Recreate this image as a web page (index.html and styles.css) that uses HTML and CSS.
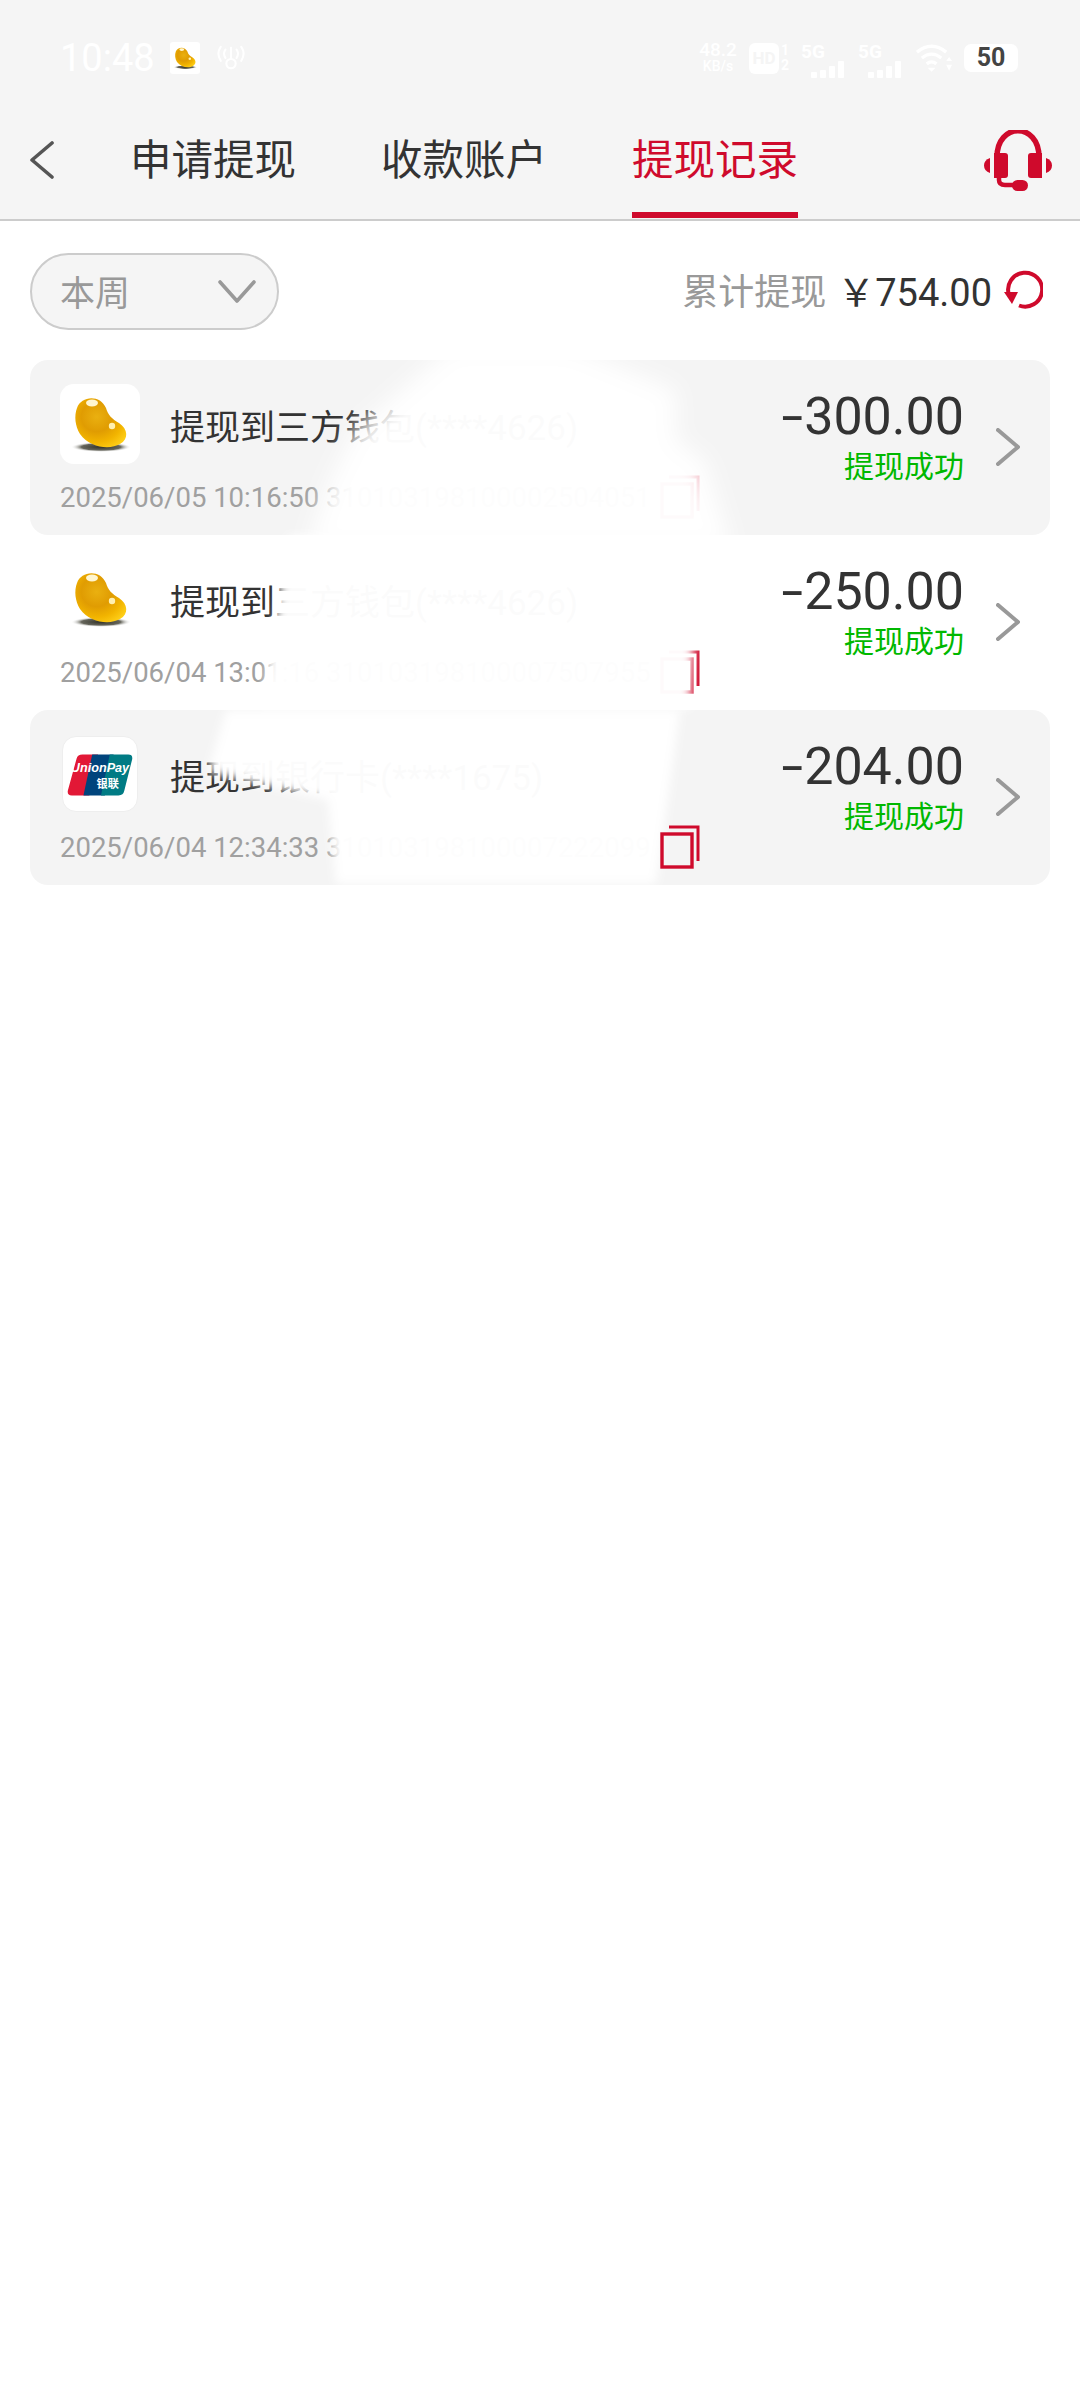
FILE: index.html
```html
<!DOCTYPE html>
<html lang="zh-CN">
<head>
  <meta charset="UTF-8">
  <title>提现记录</title>
  <meta name="viewport" content="width=device-width, initial-scale=1.0">
  <link rel="stylesheet" href="styles.css">
</head>
<body>

<!-- Shared gradients for the bean artwork -->
<svg class="defs" width="0" height="0">
  <defs>
    <radialGradient id="beanFill" cx="0.42" cy="0.38" r="0.72">
      <stop offset="0" stop-color="#eab010"/>
      <stop offset="0.42" stop-color="#e09c02"/>
      <stop offset="0.72" stop-color="#f2b400"/>
      <stop offset="1" stop-color="#ffd018"/>
    </radialGradient>
    <radialGradient id="beanShadow">
      <stop offset="0" stop-color="#333329"/>
      <stop offset="0.65" stop-color="#66665c"/>
      <stop offset="1" stop-color="#ffffff" stop-opacity="0"/>
    </radialGradient>
    <symbol id="bean" viewBox="0 0 80 80">
      <ellipse cx="41" cy="63" rx="30" ry="5" fill="url(#beanShadow)"/>
      <path d="M17 24 C21 12 40 10 46 24 C48 31 52 35 59 39 C68 45 69 55 60 60 C50 66 30 64 20 50 C15 42 14 32 17 24 Z" fill="url(#beanFill)"/>
      <ellipse cx="32" cy="19" rx="6" ry="3.4" fill="#fff6d0"/>
      <circle cx="52" cy="42" r="3.2" fill="#fff0b0"/>
    </symbol>
    <symbol id="copy" viewBox="0 0 40 44">
      <path d="M9 2 H38 V36" fill="none" stroke="#cf0a2c" stroke-width="3"/>
      <rect x="2" y="9" width="30" height="33" fill="none" stroke="#cf0a2c" stroke-width="3.4"/>
    </symbol>
    <symbol id="next" viewBox="0 0 24 38">
      <path d="M2 2 L22 19 L2 36" fill="none" stroke="#999" stroke-width="4" stroke-linecap="round" stroke-linejoin="round"/>
    </symbol>
  </defs>
</svg>

<header class="top">
  <div class="status-bar">
    <span class="clock">10:48</span>
    <svg class="status-bean" viewBox="0 0 30 32">
      <rect width="30" height="32" rx="3" fill="#fff"/>
      <use href="#bean" x="-1" y="0" width="32" height="32"/>
    </svg>
    <svg class="hotspot" viewBox="0 0 32 30" fill="none" stroke="#fff" stroke-width="2.2" stroke-linecap="round">
      <circle cx="16" cy="21" r="5"/>
      <path d="M16 4 V15 M10 6 Q7 10 10 15 M22 6 Q25 10 22 15 M5 3 Q0 10 5 18 M27 3 Q32 10 27 18"/>
    </svg>
    <div class="status-right">
      <div class="speed"><span>48.2</span><span class="speed-unit">KB/s</span></div>
      <div class="hd">HD</div>
      <div class="sim-nums"><span>1</span><span>2</span></div>
      <div class="signal">
        <span class="net">5G</span>
        <div class="bars"><i class="b1"></i><i class="b2"></i><i class="b3"></i><i class="b4"></i></div>
      </div>
      <div class="signal">
        <span class="net">5G</span>
        <div class="bars"><i class="b1"></i><i class="b2"></i><i class="b3"></i><i class="b4"></i></div>
      </div>
      <svg class="wifi" viewBox="0 0 38 30" fill="none" stroke="#fff" stroke-width="3.4">
        <path d="M1 9 Q16 -3 31 9 M6 15 Q16 7 26 15 M11 21 Q16 17 21 21"/>
        <path d="M12 25 L16 29 L20 25 Z M34 14 L37 18 H31 Z M34 28 L37 22 H31 Z" fill="#fff" stroke="none"/>
      </svg>
      <div class="battery">50</div>
    </div>
  </div>

  <nav class="tabs">
    <svg class="back" viewBox="0 0 24 38">
      <path d="M22 2 L2 19 L22 36" fill="none" stroke="#555" stroke-width="3.6" stroke-linecap="round" stroke-linejoin="round"/>
    </svg>
    <div class="tab">申请提现</div>
    <div class="tab">收款账户</div>
    <div class="tab active">提现记录</div>
    <svg class="headset" viewBox="0 0 72 62" fill="#cf0a2c">
      <path d="M14 27 C14 -8 56 -8 56 27" fill="none" stroke="#cf0a2c" stroke-width="5.5"/>
      <path d="M11 23 H22 Q25 23 25 26 V45 Q25 48 22 48 H11 Z"/>
      <path d="M59 23 H48 Q45 23 45 26 V45 Q45 48 48 48 H59 Z"/>
      <path d="M7 28 V43 Q1 41 1 35.5 Q1 30 7 28 Z"/>
      <path d="M63 28 V43 Q69 41 69 35.5 Q69 30 63 28 Z"/>
      <path d="M16 47 V50 Q16 55 22 55 H33" fill="none" stroke="#cf0a2c" stroke-width="4.5"/>
      <rect x="29" y="50" width="16" height="11" rx="5.5"/>
    </svg>
  </nav>
</header>

<section class="summary">
  <div class="filter">
    <span class="filter-text">本周</span>
    <svg class="filter-arrow" viewBox="0 0 38 24">
      <path d="M2 2 L19 21 L36 2" fill="none" stroke="#999" stroke-width="3.6" stroke-linecap="round" stroke-linejoin="round"/>
    </svg>
  </div>
  <div class="total">
    <span class="total-label">累计提现</span>
    <span class="total-value">￥754.00</span>
    <svg class="refresh" viewBox="0 0 40 40" fill="none">
      <path d="M6 26 A17 17 0 1 1 16 36.5" stroke="#cf0a2c" stroke-width="4"/>
      <path d="M1 23 H15 L9 35 Z" fill="#cf0a2c"/>
    </svg>
  </div>
</section>

<main class="records">
  <div class="record alt">
    <div class="record-main">
      <div class="record-head">
        <svg class="icon"><use href="#bean"/></svg>
        <span class="record-title">提现到三方钱包(****4626)</span>
      </div>
      <div class="record-meta">
        <span class="record-date">2025/06/05 10:16:50 310103198100002504051</span>
        <svg class="copy"><use href="#copy"/></svg>
      </div>
    </div>
    <div class="record-side">
      <div class="amount"><span class="minus">-</span>300.00</div>
      <div class="state">提现成功</div>
    </div>
    <svg class="next"><use href="#next"/></svg>
  </div>

  <div class="record">
    <div class="record-main">
      <div class="record-head">
        <svg class="icon"><use href="#bean"/></svg>
        <span class="record-title">提现到三方钱包(****4626)</span>
      </div>
      <div class="record-meta">
        <span class="record-date">2025/06/04 13:01:16 310103198100007507955</span>
        <svg class="copy"><use href="#copy"/></svg>
      </div>
    </div>
    <div class="record-side">
      <div class="amount"><span class="minus">-</span>250.00</div>
      <div class="state">提现成功</div>
    </div>
    <svg class="next"><use href="#next"/></svg>
  </div>

  <div class="record alt">
    <div class="record-main">
      <div class="record-head">
        <svg class="icon icon-card" viewBox="0 0 76 76">
          <path d="M14 22 Q15 18 20 18 H36 L27 60 H9 Q4 60 5 55 Z" fill="#e21836"/>
          <path d="M30 18 H52 L43 60 H21 Z" fill="#00447c"/>
          <path d="M48 18 H67 Q72 18 71 23 L63 55 Q62 60 57 60 H39 Z" fill="#007b84"/>
          <text class="card-en" x="38" y="36" text-anchor="middle">UnionPay</text>
          <text class="card-zh" x="46" y="52" text-anchor="middle">银联</text>
        </svg>
        <span class="record-title">提现到银行卡(****1675)</span>
      </div>
      <div class="record-meta">
        <span class="record-date">2025/06/04 12:34:33 310103198100007222099</span>
        <svg class="copy copy-top"><use href="#copy"/></svg>
      </div>
    </div>
    <div class="record-side">
      <div class="amount"><span class="minus">-</span>204.00</div>
      <div class="state">提现成功</div>
    </div>
    <svg class="next"><use href="#next"/></svg>
  </div>

  <!-- Soft white wash lying across the middle of the list -->
  <svg class="wash" viewBox="0 0 1080 530">
    <defs>
      <filter id="soft" x="-20%" y="-20%" width="140%" height="140%">
        <feGaussianBlur stdDeviation="11"/>
      </filter>
      <filter id="softer" x="-20%" y="-20%" width="140%" height="140%">
        <feGaussianBlur stdDeviation="5"/>
      </filter>
    </defs>
    <path d="M452 -14 H570 L676 30 V80 L705 100 L732 190 H306 L330 120 L355 70 Z" fill="#fff" fill-opacity="0.98" filter="url(#soft)"/>
    <path d="M288 176 H700 L690 348 H262 Z" fill="#fff" fill-opacity="0.98" filter="url(#softer)"/>
    <path d="M226 350 H680 L656 524 H336 L328 440 L208 412 Z" fill="#fff" fill-opacity="0.98" filter="url(#softer)"/>
  </svg>
</main>

</body>
</html>
```

FILE: styles.css
```css
* {
  margin: 0;
  padding: 0;
  box-sizing: border-box;
}

html, body {
  height: 100%;
}

body {
  background: #fff;
  color: #333;
  font-family: Roboto, "Noto Sans CJK SC", sans-serif;
}

.defs {
  display: block;
  height: 0;
}

/* top bar */
.top {
  background: #f5f5f5;
  border-bottom: 2px solid #ccc;
}

.status-bar {
  height: 116px;
  padding: 0 62px 0 60px;
  display: flex;
  align-items: center;
}

.clock {
  color: #fff;
  font-size: 38px;
  line-height: 1;
}

.status-bean {
  width: 30px;
  height: 32px;
  margin-left: 15px;
}

.hotspot {
  width: 30px;
  height: 28px;
  margin-left: 16px;
}

.status-right {
  margin-left: auto;
  display: flex;
  align-items: center;
}

.speed {
  color: #fff;
  width: 40px;
  font-size: 19px;
  line-height: 16px;
  font-weight: 500;
  text-align: center;
  display: flex;
  flex-direction: column;
}

.speed-unit {
  font-size: 14px;
}

.hd {
  width: 30px;
  height: 31px;
  margin-left: 11px;
  background: #fff;
  border-radius: 6px;
  color: #f5f5f5;
  font-size: 17px;
  font-weight: 700;
  line-height: 31px;
  text-align: center;
}

.sim-nums {
  margin-left: 2px;
  width: 11px;
  color: #fff;
  font-size: 14px;
  font-weight: 700;
  line-height: 15px;
  display: flex;
  flex-direction: column;
}

.signal {
  width: 45px;
  height: 31px;
  margin-left: 9px;
  display: flex;
  flex-direction: column;
  justify-content: space-between;
}

.signal + .signal {
  margin-left: 12px;
}

.net {
  color: #fff;
  font-size: 19px;
  font-weight: 700;
  line-height: 18px;
}

.bars {
  align-self: flex-end;
  display: flex;
  align-items: flex-end;
  gap: 3px;
  width: 35px;
}

.bars i {
  width: 6px;
  background: #fff;
  border-radius: 1px;
}

.bars .b1 { height: 6px; }
.bars .b2 { height: 8px; }
.bars .b3 { height: 12px; }
.bars .b4 { height: 17px; }

.wifi {
  width: 37px;
  height: 30px;
  margin-left: 13px;
}

.battery {
  width: 54px;
  height: 28px;
  margin-left: 11px;
  background: #fff;
  border-radius: 7px;
  color: #444;
  font-size: 25px;
  font-weight: 700;
  line-height: 28px;
  text-align: center;
}

.tabs {
  height: 103px;
  padding: 0 25px 0 30px;
  display: flex;
  align-items: stretch;
  gap: 85px;
}

.back {
  width: 24px;
  height: 38px;
  align-self: center;
  margin: 0 -9px 16px 0;
}

.tab {
  font-size: 41.5px;
  line-height: 48px;
  padding-top: 21px;
  border-bottom: 6px solid transparent;
  margin-bottom: 1px;
}

.tab.active {
  color: #cf0a2c;
  border-bottom-color: #cf0a2c;
}

.headset {
  width: 72px;
  height: 62px;
  margin: 14px 0 0 auto;
}

/* filter and total */
.summary {
  height: 139px;
  padding: 2px 37px 0 30px;
  display: flex;
  align-items: center;
  justify-content: space-between;
}

.filter {
  width: 249px;
  height: 77px;
  padding: 0 21px 0 28px;
  display: flex;
  align-items: center;
  justify-content: space-between;
  background: #f5f5f5;
  border: 2px solid #ccc;
  border-radius: 39px;
  color: #999;
  font-size: 35px;
}

.filter-text {
  margin-bottom: 3px;
}

.filter-arrow {
  width: 38px;
  height: 24px;
}

.total {
  display: flex;
  align-items: center;
  margin-bottom: 5px;
}

.total-label {
  color: #999;
  font-size: 36px;
}

.total-value {
  font-size: 38px;
  margin-left: 11px;
}

.refresh {
  width: 40px;
  height: 40px;
  margin-left: 11px;
}

/* record list */
.records {
  position: relative;
  padding: 0 30px;
}

.record {
  height: 175px;
  padding: 24px 30px 0;
  border-radius: 18px;
  display: flex;
  align-items: flex-start;
}

.record.alt {
  background: #f4f4f4;
}

.record-main {
  width: 640px;
}

.record-head {
  height: 80px;
  display: flex;
  align-items: center;
}

.icon {
  flex: none;
  width: 80px;
  height: 80px;
  background: #fff;
  border-radius: 14px;
}

.icon-card {
  width: 76px;
  height: 76px;
  margin: 0 2px;
  border: 1px solid #eee;
}

.card-en {
  fill: #fff;
  font: italic 700 13px "Liberation Sans", sans-serif;
}

.card-zh {
  fill: #fff;
  font: 700 11.5px "Noto Sans CJK SC", sans-serif;
}

.record-title {
  margin-left: 30px;
  font-size: 35px;
  white-space: nowrap;
}

.record-meta {
  height: 44px;
  margin-top: 11px;
  display: flex;
  align-items: center;
  gap: 6px;
}

.record-date {
  flex: 1;
  min-width: 0;
  overflow: hidden;
  color: #a0a0a0;
  font-size: 27.5px;
  white-space: nowrap;
}

.copy {
  flex: none;
  width: 40px;
  height: 44px;
}

.copy-top {
  position: relative;
  z-index: 2;
}

.record-side {
  margin-left: auto;
  margin-top: 4px;
  text-align: right;
}

.amount {
  font-size: 52px;
  line-height: 58px;
}

.minus {
  display: inline-block;
  margin-right: 5px;
  transform: scaleX(1.5);
}

.state {
  margin-top: 3px;
  color: #00b800;
  font-size: 30px;
  line-height: 36px;
}

.next {
  flex: none;
  width: 24px;
  height: 38px;
  margin: 44px 0 0 32px;
}

.wash {
  position: absolute;
  top: 0;
  left: 0;
  width: 1080px;
  height: 530px;
  overflow: hidden;
  pointer-events: none;
}
```
